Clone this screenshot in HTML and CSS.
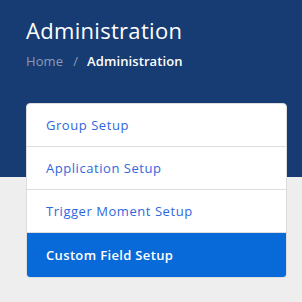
FILE: index.html
```html
<!DOCTYPE html>
<html>
<head>
<meta charset="utf-8">
<link rel="stylesheet" href="styles.css">
</head>
<body>
<header class="hero">
  <h1 class="title">Administration</h1>
  <nav class="crumbs"><span class="crumb-link">Home</span><span class="sep">/</span><span class="crumb-current">Administration</span></nav>
</header>
<main class="content">
  <ul class="menu">
    <li class="menu-item">Group Setup</li>
    <li class="menu-item">Application Setup</li>
    <li class="menu-item">Trigger Moment Setup</li>
    <li class="menu-item active">Custom Field Setup</li>
  </ul>
</main>
</body>
</html>
```
FILE: styles.css
```css
html, body { margin: 0; padding: 0; }
body {
  background: #eeeeee;
  font-family: "Open Sans", "Noto Sans", sans-serif;
  width: 302px;
  height: 302px;
  overflow: hidden;
}
.hero {
  background: #163c73;
  height: 177px;
  padding: 16px 26px 0;
  box-sizing: border-box;
}
.title {
  margin: 0;
  color: #ffffff;
  font-size: 22px;
  font-weight: 500;
  line-height: 28px;
  letter-spacing: 0.3px;
}
.crumbs {
  margin-top: 8px;
  font-size: 13px;
  line-height: 18px;
  color: #ffffff;
  display: flex;
  letter-spacing: 0.1px;
}
.crumb-link { color: #8c9bb3; }
.sep { color: #8c9bb3; margin: 0 9px 0 10px; }
.crumb-current { font-weight: 600; }
.content {
  padding: 0 15px 0 26px;
  margin-top: -74px;
}
.menu {
  list-style: none;
  margin: 0;
  padding: 0;
  background: #ffffff;
  border: 1px solid #dddddd;
  border-radius: 4px;
  overflow: hidden;
}
.menu-item {
  height: 42px;
  padding: 0 19px;
  display: flex;
  align-items: center;
  font-size: 13px;
  color: #2f68dd;
  border-bottom: 1px solid #dddddd;
  letter-spacing: 0.55px;
}
.menu-item:last-child { border-bottom: none; height: 44px; }
.menu-item.active {
  background: #086ad8;
  color: #ffffff;
  font-weight: 600;
  letter-spacing: 0.35px;
}
```
